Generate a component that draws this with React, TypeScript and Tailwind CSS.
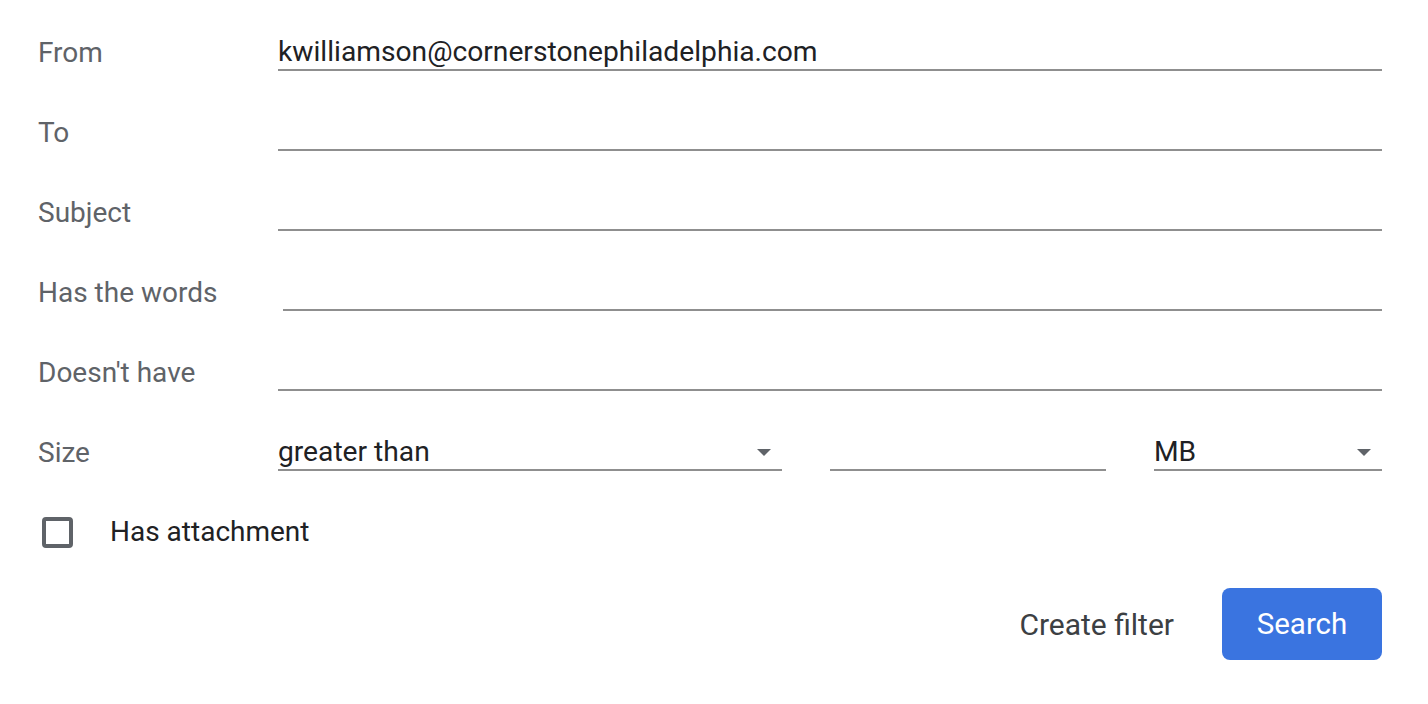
import React from "react";

const labelCls = "w-[240px] shrink-0 text-[28px] leading-[32px] text-[#5f6368] pb-[2px]";
const lineCls = "h-[48px] flex items-end border-b-2 border-[#8f8f8f] text-[28.2px] leading-[32px] text-[#202124] pb-[1px]";

function Arrow() {
  return (
    <svg width="16" height="8" viewBox="0 0 16 8" className="mb-[11px] mr-[10px]">
      <path d="M1 0 L15 0 L8 7 Z" fill="#5f6368" />
    </svg>
  );
}

function Row({ label, value, offset }: { label: string; value?: string; offset?: boolean }) {
  return (
    <div className="flex items-end">
      <div className={labelCls}>{label}</div>
      <div className={`${lineCls} flex-1 ${offset ? "ml-[5px]" : ""}`}>{value}</div>
    </div>
  );
}

export default function App() {
  return (
    <div className="w-[1428px] h-[704px] bg-white pl-[38px] pr-[46px] pt-[23px]" style={{ fontFamily: "Roboto, 'Liberation Sans', sans-serif" }}>
      <div className="flex flex-col gap-[32px]">
        <Row label="From" value="kwilliamson@cornerstonephiladelphia.com" />
        <Row label="To" />
        <Row label="Subject" />
        <Row label="Has the words" offset />
        <Row label="Doesn't have" />
        <div className="flex items-end">
          <div className={labelCls}>Size</div>
          <div className={`${lineCls} w-[504px] justify-between`}>
            <span>greater than</span>
            <Arrow />
          </div>
          <div className={`${lineCls} w-[276px] ml-[48px]`}></div>
          <div className={`${lineCls} w-[228px] ml-[48px] justify-between`}>
            <span>MB</span>
            <Arrow />
          </div>
        </div>
      </div>
      <div className="flex items-center mt-[45px] h-[32px]">
        <div className="w-[31px] h-[31px] ml-[4px] border-[4px] border-[#5f6368] rounded-[4px]" />
        <span className="ml-[37px] text-[28px] text-[#202124]">Has attachment</span>
      </div>
      <div className="flex justify-end items-center mt-[40px]">
        <button className="text-[30px] text-[#3c4043] mr-[48px]">Create filter</button>
        <button className="w-[160px] h-[72px] rounded-[8px] bg-[#3a74e0] text-white text-[29.5px]">Search</button>
      </div>
    </div>
  );
}
